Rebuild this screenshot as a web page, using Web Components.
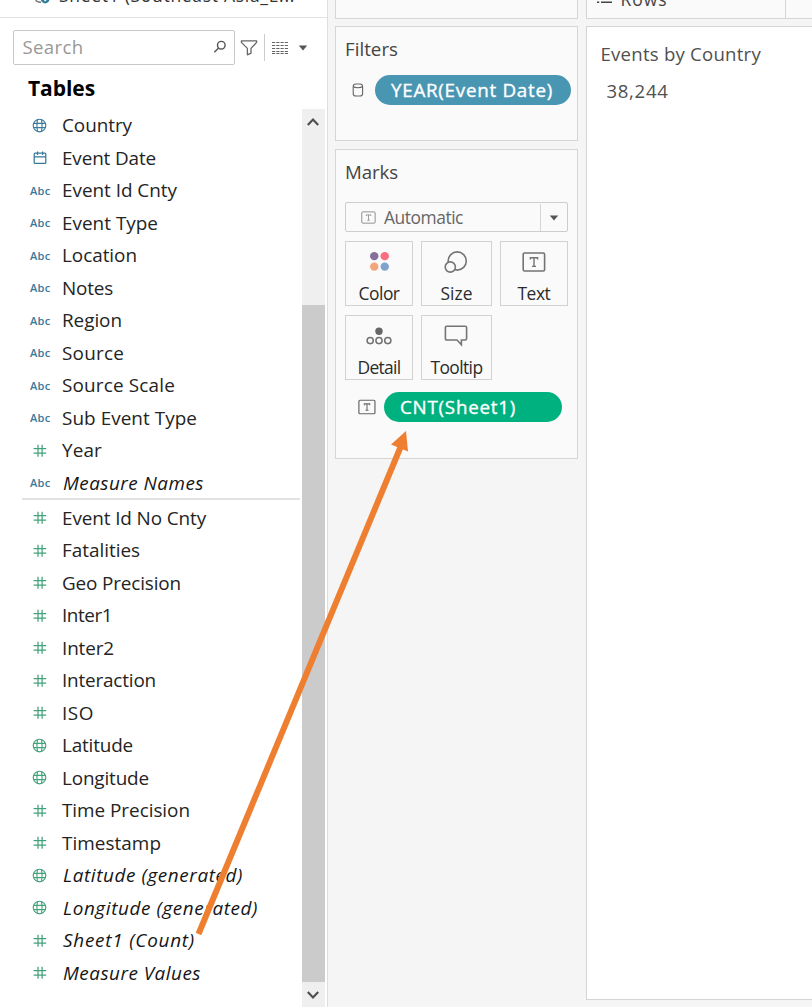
<!DOCTYPE html>
<html lang="en">
<head>
<meta charset="utf-8">
<title>Events by Country</title>
<style>
html,body{margin:0;height:1007px;overflow:hidden;background:#f5f5f5;font-family:"Open Sans","Liberation Sans",sans-serif}
</style>
</head>
<body>
<viz-app></viz-app>
<script>
const define = (name, html, init) => {
  const t = document.createElement('template');
  t.innerHTML = '<style>*{box-sizing:border-box}</style>' + html;
  customElements.define(name, class extends HTMLElement {
    connectedCallback() {
      if (this.shadowRoot) return;
      this.attachShadow({mode: 'open'}).append(t.content.cloneNode(true));
      if (init) init(this, this.shadowRoot);
    }
  });
};

/* Label whose tracking is adjusted so that its text spans a given width. */
define('fit-text', `<style>:host{display:inline-block;white-space:nowrap}</style><span><slot></slot></span>`, (el, root) => {
  const w = parseFloat(el.getAttribute('w'));
  const n = [...el.textContent].length;
  const s = root.querySelector('span');
  const now = s.getBoundingClientRect().width;
  if (w && n) s.style.letterSpacing = ((w - now) / n).toFixed(3) + 'px';
});

const icons = {
  globe: ['0 0 16 16', '<g fill="none" stroke="currentColor" stroke-width="1.15"><circle cx="7.5" cy="7.5" r="6.3"/><path d="M5.4 1.6Q4.4 7.5 5.4 13.4M9.6 1.6Q10.6 7.5 9.6 13.4M2 5.4h11M2 9.6h11"/></g>'],
  calendar: ['0 0 16 16', '<g fill="none" stroke="currentColor" stroke-width="1.25"><rect x="2.2" y="3.2" width="11.6" height="10.2" rx="1"/><path d="M2.2 6.8h11.6M5.5 1.4v3.6M10.6 1.4v3.6"/></g>'],
  hash: ['0 0 16 16', '<path d="M6 1.8v12M10.1 1.8v12M1.6 5.6h12.6M1.6 10.1h12.6" fill="none" stroke="currentColor" stroke-width="1.25"/>'],
  search: ['0 0 14 14', '<g fill="none" stroke="#555" stroke-width="1.4"><circle cx="8.3" cy="5.2" r="3.8"/><path d="M5.6 8L1.4 12.2"/></g>'],
  funnel: ['0 0 18 18', '<path d="M1.4 1.8h15.2v1.6L11 9.4v4.8l-3.6 1.6V9.4L1.4 3.4z" fill="none" stroke="#666" stroke-width="1.3" stroke-linejoin="round"/>'],
  list: ['0 0 16 14', '<path d="M0 1.5h16M0 4.5h16M0 7.5h16M0 10.5h16M0 12.5h16" stroke="#666" stroke-width="1.2" stroke-dasharray="3.2 1.06"/>'],
  caret: ['0 0 10 6', '<path d="M.8.5h8.4L5 5.6z" fill="#555"/>'],
  up: ['0 0 14 10', '<path d="M1.8 8L7 2.6 12.2 8" fill="none" stroke="#505050" stroke-width="2.2"/>'],
  down: ['0 0 14 10', '<path d="M1.8 2L7 7.4 12.2 2" fill="none" stroke="#505050" stroke-width="2.2"/>'],
  cylinder: ['0 0 12 14', '<g fill="none" stroke="#666" stroke-width="1.1"><rect x="1.2" y="1" width="9.4" height="12" rx="2.6"/><path d="M1.4 3.8c1.5 1.2 7.5 1.2 9 0"/></g>'],
  textbox: ['0 0 24 20', '<rect x="1.2" y="1" width="21.4" height="18" rx="1.4" fill="none" stroke="currentColor" stroke-width="1.6"/><path d="M8.4 7.6V5.8h7.2v1.8M12 5.8v8.6M10 14.4h4" fill="none" stroke="currentColor" stroke-width="1.4"/>'],
  color: ['0 0 22 22', '<circle cx="5.5" cy="5.4" r="4.4" fill="#86709b"/><circle cx="16.5" cy="5.4" r="4.4" fill="#fa6e7f"/><circle cx="5.5" cy="16.4" r="4.4" fill="#f3a67a"/><circle cx="16.5" cy="16.4" r="4.4" fill="#7fa3cb"/>'],
  size: ['0 0 24 24', '<g fill="#fafafa" stroke="#757575" stroke-width="1.6"><circle cx="13.2" cy="11" r="9.1"/><circle cx="6.3" cy="17" r="5.1"/></g>'],
  detail: ['0 0 26 18', '<circle cx="13" cy="4.2" r="3.7" fill="#666"/><g fill="none" stroke="#707070" stroke-width="1.5"><circle cx="4.2" cy="13.6" r="3.1"/><circle cx="13" cy="13.6" r="3.1"/><circle cx="21.8" cy="13.6" r="3.1"/></g>'],
  tooltip: ['0 0 24 22', '<path d="M2.8 1.2h18.4q1.4 0 1.4 1.4v11q0 1.4-1.4 1.4h-3.8v4.8L13 15H2.8q-1.4 0-1.4-1.4v-11q0-1.4 1.4-1.4z" fill="none" stroke="#757575" stroke-width="1.6"/>'],
  rows: ['0 0 17 8', '<path d="M1 6.3h2.2M5 6.3h11M1 1.5h2.2M5 1.5h11" stroke="#444" stroke-width="1.5"/>'],
  source: ['0 0 18 16', '<path d="M8 1H3v10q0 2 5 2.3" fill="none" stroke="#777" stroke-width="1.5"/><circle cx="12.2" cy="10" r="4.4" fill="#2f7f9d"/><path d="M10.3 9.6l1.9 2 2.2-2.4" fill="none" stroke="#fff" stroke-width="1.2"/>']
};
define('viz-icon', `<style>:host{display:block;flex:none;line-height:0}</style>`, (el, root) => {
  const [box, body] = icons[el.getAttribute('name')];
  const s = document.createElement('div');
  s.innerHTML = `<svg width="${el.getAttribute('w')}" height="${el.getAttribute('h')}" viewBox="${box}">${body}</svg>`;
  root.append(s);
});

define('field-row', `<style>
  :host{display:grid;grid-template-columns:62px 1fr;align-items:center;height:32.5px;font-size:18.9px;line-height:24px;color:#242424}
  :host([italic]) .t{font-style:italic;color:#151515;padding-left:1px}
  .t{padding-bottom:1px}
  .i{padding-left:30px;display:flex;color:#43a27b}
  :host([dim]) .i{color:#39799b}
  viz-icon{margin-left:2px}
  .abc{font-size:11px;font-weight:600;line-height:16px;color:#39799b}
</style><div class="i"></div><div class="t"></div>`, (el, root) => {
  const k = el.getAttribute('kind');
  root.querySelector('.i').innerHTML = k === 'abc'
    ? '<fit-text class="abc" w="20.5">Abc</fit-text>' : `<viz-icon name="${k}" w="16" h="16"></viz-icon>`;
  root.querySelector('.t').innerHTML = `<fit-text w="${el.getAttribute('w')}">${el.getAttribute('label')}</fit-text>`;
});

define('field-list', `<style>
  :host{display:block;padding-top:.4px;width:301.5px}
  hr{border:0;height:1.5px;background:#e2e2e2;margin:-1px 2px 2px 22px}
</style>`, (el, root) => {
  const groups = [[
    ['globe','Country',70],['calendar','Event Date',94],['abc','Event Id Cnty',115],['abc','Event Type',96],['abc','Location',75],
    ['abc','Notes',51],['abc','Region',60],['abc','Source',62],['abc','Source Scale',113],['abc','Sub Event Type',135],
    ['hash','Year',40,0,1],['abc','Measure Names',141,1]],
    [['hash','Event Id No Cnty',144],['hash','Fatalities',78],['hash','Geo Precision',119],['hash','Inter1',50],['hash','Inter2',52],
    ['hash','Interaction',94],['hash','ISO',32],['globe','Latitude',71],['globe','Longitude',87],['hash','Time Precision',128],
    ['hash','Timestamp',99],['globe','Latitude (generated)',180,1],['globe','Longitude (generated)',195,1],
    ['hash','Sheet1 (Count)',132,1],['hash','Measure Values',138,1]]];
  const d = document.createElement('div');
  d.innerHTML = groups.map((g, i) => g.map(([k, l, w, it, green]) =>
    `<field-row kind="${k}" label="${l}" w="${w}" ${it ? 'italic' : ''} ${!i && !green ? 'dim' : ''}></field-row>`).join('')).join('<hr>');
  root.append(d);
});

define('scroll-bar', `<style>
  :host{display:flex;flex-direction:column;width:23.5px;background:#efefef}
  .b{height:25px;display:grid;place-items:center;flex:none}
  .gap{height:171px}.thumb{flex:1;background:#cbcbcb}
</style><div class="b"><viz-icon name="up" w="14" h="10"></viz-icon></div><div class="gap"></div><div class="thumb"></div><div class="b"><viz-icon name="down" w="14" h="10"></viz-icon></div>`);

define('data-pane', `<style>
  :host{display:flex;flex-direction:column;width:328px;height:1007px;background:#fff;border-right:1.5px solid #dedede;overflow:hidden}
  .src{height:18px;flex:none;border-bottom:1.5px solid #e3e3e3;display:flex;overflow:hidden;padding-left:33px;gap:8px;font-size:17.5px;color:#333;line-height:22px}
  .src viz-icon{margin-top:-11px}
  .src fit-text{margin-top:-16px}
  .tools{display:flex;align-items:center;height:35px;margin:12px 0 0 12.5px;flex:none}
  .in{width:222px;height:35px;border:1.5px solid #c9c9c9;border-radius:2px;display:flex;align-items:center;justify-content:space-between;padding:0 7px 2px 9px;font-size:18.6px;color:#989898}
  .fun{margin-left:5px}.sep{width:1px;height:27px;background:#ccc;margin:0 7px 0 6.5px}.car{margin-left:10px}
  h2{margin:11px 0 0 28px;height:33px;font-size:21px;line-height:25px;font-weight:700;color:#000;flex:none}
  .body{display:flex;flex:1;height:898px}
</style>
<div class="src"><viz-icon name="source" w="18" h="16"></viz-icon><fit-text w="236">Sheet1 (Southeast Asia_E...</fit-text></div>
<div class="tools"><div class="in"><fit-text w="61">Search</fit-text><viz-icon name="search" w="14" h="14"></viz-icon></div>
<viz-icon class="fun" name="funnel" w="18" h="18"></viz-icon><div class="sep"></div><viz-icon name="list" w="16" h="14"></viz-icon><viz-icon class="car" name="caret" w="10" h="6"></viz-icon></div>
<h2><fit-text w="67">Tables</fit-text></h2>
<div class="body"><field-list></field-list><scroll-bar></scroll-bar></div>`);

define('shelf-card', `<style>:host{display:block;background:#fafafa;border:1.5px solid #d5d5d5;font-size:18.7px;line-height:24px;color:#444}
  .h{height:24px;margin:10px 0 0 9px}</style>
<div class="h"><slot name="title"></slot></div><slot></slot>`);

define('viz-pill', `<style>:host{display:flex;align-items:center;height:30px;border-radius:15px;color:#fff;padding-left:16px;font-size:18.8px;-webkit-text-stroke:.35px #fff}</style><slot></slot>`);

define('mark-button', `<style>:host{display:flex;flex-direction:column;align-items:center;justify-content:space-between;height:65px;border:1.5px solid #d2d2d2;background:#fafafa;color:#2b2b2b;font-size:17.4px;line-height:22px;padding-bottom:1.5px}
  .i{height:40px;display:grid;place-items:center;color:#737373}</style><div class="i"><slot name="icon"></slot></div><slot></slot>`);

define('card-column', `<style>
  :host{display:flex;flex-direction:column;gap:8px;width:243px;height:1007px;margin-left:7px}
  .pages{height:19px;flex:none;background:#fafafa;border:1.5px solid #d5d5d5;border-top:0}
  .filters{height:115px;margin-top:-1px}.marks{height:310px}
  .f{display:flex;align-items:center;margin:14px 0 0 16px;gap:11px}
  .f viz-pill{width:195.5px;background:#4996b2}
  .select{display:flex;align-items:center;width:223px;height:30px;margin:18px 0 9px 9px;border:1.5px solid #cdcdcd;border-radius:2px;color:#666;font-size:17.4px;padding-left:15px}
  .select viz-icon:first-child{color:#909090}
  .select fit-text{margin-left:8px;flex:1}
  .dd{border-left:1px solid #d5d5d5;height:27px;width:27.5px;display:grid;place-items:center}
  .grid{display:grid;grid-template-columns:68px 70.5px 68px;column-gap:8.2px;row-gap:9px;margin-left:9px}
  .m{display:flex;align-items:center;margin:12px 0 0 22px;gap:8px;color:#666}
  .m viz-pill{width:178px;background:#00b180}
</style>
<div class="pages"></div>
<shelf-card class="filters"><fit-text slot="title" w="53">Filters</fit-text>
 <div class="f"><viz-icon name="cylinder" w="12" h="14"></viz-icon><viz-pill><fit-text w="162">YEAR(Event Date)</fit-text></viz-pill></div></shelf-card>
<shelf-card class="marks"><fit-text slot="title" w="53">Marks</fit-text>
 <div class="select"><viz-icon name="textbox" w="15" h="13"></viz-icon><fit-text w="79">Automatic</fit-text><div class="dd"><viz-icon name="caret" w="10" h="6"></viz-icon></div></div>
 <div class="grid">
  <mark-button><viz-icon slot="icon" name="color" w="21" h="21"></viz-icon><fit-text w="41">Color</fit-text></mark-button>
  <mark-button><viz-icon slot="icon" name="size" w="24" h="24"></viz-icon><fit-text w="32">Size</fit-text></mark-button>
  <mark-button><viz-icon slot="icon" name="textbox" w="24" h="20"></viz-icon><fit-text w="33">Text</fit-text></mark-button>
  <mark-button><viz-icon slot="icon" name="detail" w="26" h="18"></viz-icon><fit-text w="43">Detail</fit-text></mark-button>
  <mark-button><viz-icon slot="icon" name="tooltip" w="24" h="22"></viz-icon><fit-text w="52">Tooltip</fit-text></mark-button>
 </div>
 <div class="m"><viz-icon name="textbox" w="18" h="16"></viz-icon><viz-pill><fit-text w="116">CNT(Sheet1)</fit-text></viz-pill></div></shelf-card>`);

define('sheet-view', `<style>
  :host{display:flex;flex-direction:column;gap:7px;flex:1;margin-left:7.5px;overflow:hidden}
  .rows{display:grid;grid-template-columns:199.5px 1fr;height:19px;flex:none;background:#fafafa;border:1.5px solid #d5d5d5;border-width:0 0 1.5px 1.5px;font-size:17.5px;line-height:22px;color:#444;overflow:hidden}
  .l{display:flex;gap:8px;padding-left:9px;border-right:1.5px solid #d5d5d5;height:18px}
  .l viz-icon{margin-top:-4px}.l fit-text{margin-top:-12px}
  .sheet{height:974px;background:#fff;border:1.5px solid #d5d5d5;border-right:0;color:#505050;font-size:18.6px;line-height:24px;padding:15px 0 0 14px}
  .num{margin:13px 0 0 6px}
</style>
<div class="rows"><div class="l"><viz-icon name="rows" w="17" h="8"></viz-icon><fit-text w="47">Rows</fit-text></div></div>
<div class="sheet"><div><fit-text w="160.5">Events by Country</fit-text></div><div class="num"><fit-text w="62">38,244</fit-text></div></div>`);

define('viz-app', `<style>
  :host{display:flex;position:relative;width:812px;height:1007px;background:#f5f5f5;overflow:hidden}
  .arrow{position:absolute;inset:0;pointer-events:none}
</style>
<data-pane></data-pane><card-column></card-column><sheet-view></sheet-view>
<svg class="arrow" width="812" height="1007"><path d="M198.5 934L401 446" stroke="#ee7f31" stroke-width="6"/><path d="M406 431L408 451.5L391 444.5z" fill="#ee7f31"/></svg>`);
</script>
</body>
</html>
